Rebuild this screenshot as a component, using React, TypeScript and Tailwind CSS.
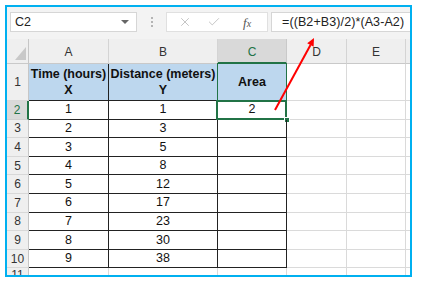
import React from 'react';
import { X, Check } from 'lucide-react';

const data = [
  [2, 1, 1],
  [3, 2, 3],
  [4, 3, 5],
  [5, 4, 8],
  [6, 5, 12],
  [7, 6, 17],
  [8, 7, 23],
  [9, 8, 30],
  [10, 9, 38],
];

function ColHead({ label, active }: { label: string; active?: boolean }) {
  return (
    <div
      className={
        active
          ? 'flex items-center justify-center border-r border-[#c9c9c9] border-b-2 border-b-[#217346] bg-[#d9d9d9] text-[12px] text-[#217346] pt-[2px]'
          : 'flex items-center justify-center border-r border-[#d4d4d4] border-b border-b-[#c9c9c9] bg-[#efefef] text-[12px] text-[#333] pt-[2px]'
      }
    >
      {label}
    </div>
  );
}

function RowHead({ n, active }: { n: number; active?: boolean }) {
  return (
    <div
      className={
        active
          ? 'flex items-center justify-center bg-[#d9d9d9] border-r-2 border-r-[#217346] border-b border-b-[#d0d0d0] text-[12px] text-[#217346]'
          : 'flex items-center justify-center bg-[#efefef] border-r border-r-[#c6c6c6] border-b border-b-[#d8d8d8] text-[12px] text-[#333]'
      }
    >
      {n}
    </div>
  );
}

export default function App() {
  return (
    <div className="relative w-[421px] h-[285px] bg-white p-[5px] font-['Liberation_Sans',Arial,sans-serif]">
      <div className="w-[407px] h-[272px] border-2 border-[#00b0f0] bg-[#f3f3f3] flex flex-col overflow-hidden">
        {/* formula bar */}
        <div className="h-[32px] shrink-0 flex items-start pt-[5px] pl-[3px]">
          <div className="w-[127px] h-[20px] bg-white border border-[#d6d6d6] flex items-center justify-between pl-[4px] pr-[7px]">
            <span className="text-[12.5px] text-[#222]">C2</span>
            <span className="w-0 h-0 border-l-[4px] border-r-[4px] border-t-[4px] border-l-transparent border-r-transparent border-t-[#666]" />
          </div>
          <div className="w-[29px] h-[20px] flex flex-col items-center justify-center gap-[2px]">
            <span className="w-[2px] h-[2px] bg-[#b4b4b4]" />
            <span className="w-[2px] h-[2px] bg-[#b4b4b4]" />
            <span className="w-[2px] h-[2px] bg-[#b4b4b4]" />
          </div>
          <div className="w-[102px] h-[20px] bg-white border border-[#e0e0e0] flex items-center pl-[11px]">
            <X className="w-[14px] h-[14px] text-[#bdbdbd]" strokeWidth={1.5} />
            <Check className="w-[14px] h-[14px] text-[#bdbdbd] ml-[15px]" strokeWidth={1.5} />
            <span className="ml-[22px] font-['Liberation_Serif',serif] italic text-[13px] text-[#555] leading-none">
              f<span className="text-[10px]">x</span>
            </span>
          </div>
          <div className="ml-[3px] flex-1 h-[20px] bg-white border border-[#d6d6d6] border-r-0 flex items-center pl-[10px]">
            <span className="text-[12.5px] text-[#222] tracking-[0.1px]">=((B2+B3)/2)*(A3-A2)</span>
          </div>
        </div>

        {/* sheet */}
        <div className="grid grid-cols-[22px_80px_109px_69px_60px_59px_1fr] grid-rows-[25px_37px_repeat(9,18.6px)_1fr] flex-1 bg-white">
          <div className="relative bg-[#efefef] border-r border-r-[#c6c6c6] border-b border-b-[#c9c9c9]">
            <svg className="absolute left-[8px] top-[8px]" width="11" height="13" viewBox="0 0 11 13">
              <polygon points="11,0 11,13 0,13" fill="#c8c8c8" />
            </svg>
          </div>
          <ColHead label="A" />
          <ColHead label="B" />
          <ColHead label="C" active />
          <ColHead label="D" />
          <ColHead label="E" />
          <div className="bg-[#efefef] border-b border-b-[#c9c9c9]" />

          {/* row 1 */}
          <RowHead n={1} />
          <div className="flex flex-col items-center justify-center bg-[#bdd7ee] border-r border-b border-[#222] text-[12.5px] font-bold text-[#111] leading-[16px]">
            <span>Time (hours)</span>
            <span>X</span>
          </div>
          <div className="flex flex-col items-center justify-center bg-[#bdd7ee] border-r border-b border-[#222] text-[12.5px] font-bold text-[#111] leading-[16px] whitespace-nowrap">
            <span>Distance (meters)</span>
            <span>Y</span>
          </div>
          <div className="relative flex items-center justify-center bg-[#bdd7ee] border-r border-b border-[#222] text-[12.5px] font-bold text-[#111]">
            Area
            <div className="absolute -left-[1px] -top-[1px] -right-[1px] -bottom-[1px] border border-[#217346]" />
          </div>
          <div className="border-r border-b border-[#dadada]" />
          <div className="border-r border-b border-[#dadada]" />
          <div className="border-b border-[#dadada]" />

          {data.map(([n, x, y]) => (
            <React.Fragment key={n}>
              <RowHead n={n} active={n === 2} />
              <div className="flex items-center justify-center border-r border-b border-[#222] text-[12.5px] text-[#111]">
                {x}
              </div>
              <div className="flex items-center justify-center border-r border-b border-[#222] text-[12.5px] text-[#111]">
                {y}
              </div>
              <div className="relative flex items-center justify-center border-r border-b border-[#222] text-[12.5px] text-[#111]">
                {n === 2 ? '2' : ''}
                {n === 2 && (
                  <>
                    <div className="absolute -left-[2px] -top-[1px] -right-[1px] -bottom-[1px] border-2 border-[#217346]" />
                    <div className="absolute -right-[4px] -bottom-[4px] w-[6px] h-[6px] bg-[#217346] border border-white" />
                  </>
                )}
              </div>
              <div className="border-r border-b border-[#dadada]" />
              <div className="border-r border-b border-[#dadada]" />
              <div className="border-b border-[#dadada]" />
            </React.Fragment>
          ))}

          {/* row 11, cut off by the frame as in the screenshot */}
          <div className="flex items-start justify-center bg-[#efefef] border-r border-r-[#c6c6c6] text-[12px] leading-[14px] text-[#333] overflow-hidden">
            <span>11</span>
          </div>
          <div className="border-r border-[#dadada]" />
          <div className="border-r border-[#dadada]" />
          <div className="border-r border-[#dadada]" />
          <div className="border-r border-[#dadada]" />
          <div className="border-r border-[#dadada]" />
          <div />
        </div>
      </div>

      {/* red annotation arrow */}
      <svg className="absolute left-0 top-0 pointer-events-none" width="421" height="285" viewBox="0 0 421 285">
        <line x1="275" y1="110" x2="310.5" y2="45" stroke="#ff0000" strokeWidth="2" />
        <polygon points="314,38 313.6,46.8 307.2,43.3" fill="#ff0000" />
      </svg>
    </div>
  );
}
